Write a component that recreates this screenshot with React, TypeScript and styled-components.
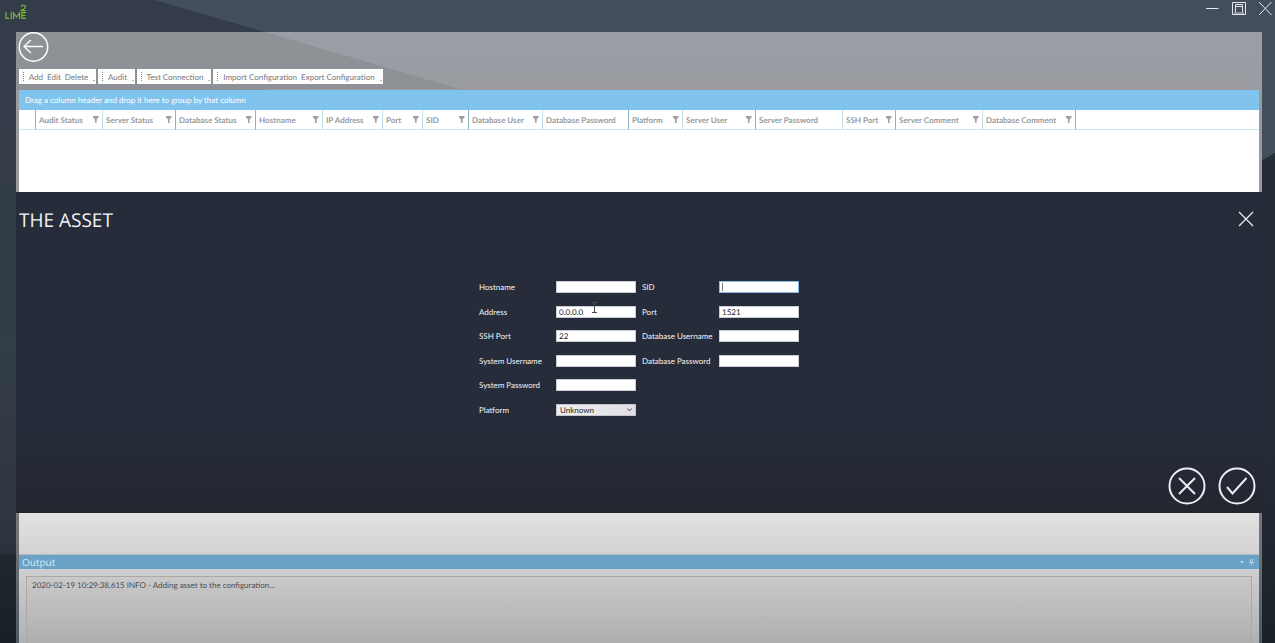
import React from "react";
import styled, { createGlobalStyle } from "styled-components";

const GlobalStyle = createGlobalStyle`
  * { box-sizing: border-box; }
  html, body { margin: 0; padding: 0; }
  body, button, input, select, table {
    font-family: Lato, "Open Sans", sans-serif;
    font-size: 8px;
    line-height: 12px;
    text-rendering: geometricPrecision;
  }
  button { border: 0; padding: 0; margin: 0; background: none; color: inherit; cursor: pointer; }
`;

const Page = styled.div`
  min-height: 100vh;
  display: flex;
  flex-direction: column;
  background:
    linear-gradient(to bottom right, #434e5c 50%, #262e39 50%) right 153px / 13px 7px no-repeat,
    linear-gradient(#434e5c 0 153px, #262d38 160px, #252c37 440px, #1a2229) right top / 13px 100% no-repeat,
    linear-gradient(#343c49, #323d47 350px, #303642 500px, #2c333e 552px, #1f272e 556px, #191f26) left top / 16px 100% no-repeat,
    linear-gradient(to top right, #343c49 50%, transparent 50%) 155px 0 / 305px 89px no-repeat,
    linear-gradient(#343c49, #343c49) left top / 155px 100% no-repeat,
    #434e5c;
`;

const TitleBar = styled.header`
  height: 32px;
  display: flex;
  justify-content: space-between;
  align-items: flex-start;
  padding: 0 3px 0 5px;
`;

const WindowButtons = styled.div`
  display: flex;
  gap: 12px;
  padding-top: 1px;
  color: #e4e8ee;
  svg { display: block; }
`;

const Body = styled.main`
  flex: 1;
  display: flex;
  flex-direction: column;
  margin: 0 13px 0 16px;
`;

const TopPanel = styled.section`
  background:
    linear-gradient(to top right, #8e9196 50%, transparent 50%) 249px 0 / 195px 57px no-repeat,
    linear-gradient(#8e9196, #8e9196) left top / 249px 58px no-repeat,
    linear-gradient(#9a9ea7, #999b9f 58px);
  padding: 0 3px;
`;

const BackButton = styled.button`
  display: block;
  height: 30px;
  margin-left: -1px;
  svg { display: block; }
`;

const Toolbars = styled.div`
  display: flex;
  gap: 2px;
  padding: 7px 0 6px;
`;

const Toolbar = styled.div<{ $width: number }>`
  width: ${(p) => p.$width}px;
  height: 15px;
  display: flex;
  align-items: center;
  justify-content: space-between;
  padding: 0 1px 0 4px;
  background: #fdfdfd;
  color: #76787c;
`;

const Grip = styled.span`
  height: 9px;
  border-left: 1px dotted #8a8a8a;
`;

const ToolbarItems = styled.div`
  display: flex;
  gap: 4px;
  white-space: nowrap;
`;

const Overflow = styled.span`
  width: 2px;
  height: 1px;
  align-self: flex-end;
  margin-bottom: 3px;
  background: #b5b5b5;
`;

const GroupBar = styled.div`
  height: 20px;
  padding: 4px 6px;
  background: #80c4ed;
  color: #fff;
  white-space: nowrap;
`;

const GridArea = styled.div`
  height: 82px;
  background: #fff;
`;

const GridTable = styled.table`
  width: 100%;
  table-layout: fixed;
  border-collapse: separate;
  border-spacing: 0;
`;

const HeaderCell = styled.th<{ $strong?: boolean; $last?: boolean }>`
  height: 20px;
  padding: 0 3px;
  border-bottom: 1px solid #cfe5f2;
  border-right: ${(p) => (p.$last ? "0" : `1px solid ${p.$strong ? "#8db4c9" : "#c3dcea"}`)};
  color: #999ba0;
  font-weight: 700;
  text-align: left;
  white-space: nowrap;
`;

const HeaderContent = styled.div`
  display: flex;
  justify-content: space-between;
  align-items: center;
  svg { flex: none; }
`;

const Dialog = styled.section`
  flex: none;
  height: 321px;
  display: flex;
  flex-direction: column;
  justify-content: space-between;
  padding: 14px 6px 8px 3px;
  background: linear-gradient(#262c39 75%, #22262f);
  color: #f2f4f8;
`;

const DialogHeader = styled.div`
  height: 28px;
  display: flex;
  justify-content: space-between;
  align-items: center;
`;

const DialogTitle = styled.h1`
  margin: 0;
  font-family: "Open Sans", "Noto Sans", sans-serif;
  font-size: 19px;
  line-height: 28px;
  font-weight: 400;
`;

const CloseButton = styled.button`
  padding: 0 2px 2px 0;
  svg { display: block; }
`;

const Form = styled.form`
  min-height: 135px;
  display: grid;
  grid-template-columns: 77px 80px 83px 80px;
  justify-content: center;
  align-content: space-between;
  padding-left: 3px;
  margin-top: -4px;
`;

const Label = styled.label<{ $second?: boolean }>`
  grid-column: ${(p) => (p.$second ? 3 : 1)};
  margin-left: ${(p) => (p.$second ? 6 : 0)}px;
  white-space: nowrap;
`;

const Field = styled.div<{ $second?: boolean }>`
  position: relative;
  height: 12px;
  display: flex;
  grid-column: ${(p) => (p.$second ? 4 : 2)};
`;

const TextInput = styled.input<{ $focused?: boolean }>`
  width: 80px;
  height: 12px;
  padding: 0 2px;
  border: 1px solid ${(p) => (p.$focused ? "#8bbde8" : "#c9ccd4")};
  border-radius: 0;
  background: #fff;
  color: #22252c;
  line-height: 10px;
  outline: 0;
`;

const Caret = styled.span`
  position: absolute;
  left: 3px;
  top: 2px;
  width: 1px;
  height: 8px;
  background: #777;
`;

const Pointer = styled.svg`
  position: absolute;
  left: 36px;
  top: -4px;
`;

const Select = styled.select`
  appearance: none;
  width: 80px;
  height: 12px;
  padding: 0 3px;
  border: 1px solid #c4c6cc;
  border-radius: 0;
  background: linear-gradient(90deg, #efeff1, #e0e0e4);
  color: #22252c;
  line-height: 10px;
`;

const Chevron = styled.svg`
  position: absolute;
  right: 4px;
  top: 4px;
  pointer-events: none;
`;

const DialogActions = styled.div`
  display: flex;
  justify-content: flex-end;
  gap: 12px;
  svg { display: block; }
`;

const BottomPanel = styled.section`
  flex: 1;
  display: flex;
  flex-direction: column;
  padding: 0 3px;
  background: linear-gradient(#77797c, #6b7176 40px, #4f5960);
`;

const Spacer = styled.div`
  height: 42px;
  background: linear-gradient(#e2e2e2, #d3d3d4);
  border-bottom: 1px solid #b9b9ba;
`;

const OutputHeader = styled.div`
  height: 14px;
  display: flex;
  justify-content: space-between;
  align-items: center;
  padding: 0 5px 0 3px;
  background: #6aa2c7;
  color: #dceaf3;
`;

const OutputTitle = styled.h2`
  margin: 0;
  font-family: "Open Sans", "Noto Sans", sans-serif;
  font-size: 10px;
  line-height: 14px;
  font-weight: 400;
`;

const PanelTools = styled.div`
  display: flex;
  gap: 4px;
  color: #b6d6ea;
  svg { display: block; }
`;

const OutputBody = styled.div`
  flex: 1;
  display: flex;
  padding: 7px 7px 0;
  background: linear-gradient(#d0cfd0, #b1b1b1);
`;

const Log = styled.div`
  flex: 1;
  padding: 2px 5px;
  border: 1px solid #aaa8a8;
  border-bottom: 0;
  background: linear-gradient(#cac9ca, #afafaf);
  color: #4c4c4e;
`;

type Column = { name: string; width: number; filter?: boolean; strong?: boolean };

const columns: Column[] = [
  { name: "Audit Status", width: 67, filter: true },
  { name: "Server Status", width: 73, filter: true, strong: true },
  { name: "Database Status", width: 80, filter: true, strong: true },
  { name: "Hostname", width: 67, filter: true },
  { name: "IP Address", width: 60, filter: true },
  { name: "Port", width: 40, filter: true },
  { name: "SID", width: 46, filter: true, strong: true },
  { name: "Database User", width: 74, filter: true },
  { name: "Database Password", width: 86, strong: true },
  { name: "Platform", width: 54, filter: true },
  { name: "Server User", width: 73, filter: true, strong: true },
  { name: "Server Password", width: 87 },
  { name: "SSH Port", width: 53, filter: true, strong: true },
  { name: "Server Comment", width: 87, filter: true },
  { name: "Database Comment", width: 93, filter: true, strong: true },
];

const toolbars = [
  { items: ["Add", "Edit", "Delete"], width: 77 },
  { items: ["Audit"], width: 37 },
  { items: ["Test Connection"], width: 74 },
  { items: ["Import Configuration", "Export Configuration"], width: 170 },
];

const Logo = () => (
  <svg width="24" height="20" viewBox="0 0 24 20" role="img" aria-label="Lime 2">
    <g fill="none" stroke="#7cb82f" strokeWidth="1.2">
      <path d="M1 12v6.400h3.500M6.300 12v7M8.600 19v-6l3 4 3-4V19M21 12.600h-4v5.800h4M17 15.500h3.500" />
      <path d="M16.300 6.800c0-2.200 4-2.200 4 .2 0 1.500-2.500 2.500-4 3.700h4.500" />
    </g>
  </svg>
);

const FilterIcon = () => (
  <svg width="6" height="8" viewBox="0 0 6 8" aria-hidden="true">
    <path d="M0 0h5.500v1.500L3.600 3.500V7H2V3.500L0 1.500z" fill="#a19fa4" />
  </svg>
);

const App = () => (
  <>
    <GlobalStyle />
    <Page>
      <TitleBar>
        <Logo />
        <WindowButtons>
          <button type="button" aria-label="Minimize">
            <svg width="14" height="15" viewBox="0 0 14 15"><path d="M0 7.500h12.500" stroke="currentColor" /></svg>
          </button>
          <button type="button" aria-label="Maximize">
            <svg width="14" height="15" viewBox="0 0 14 15" fill="none" stroke="currentColor">
              <path d="M.5 1.500h13v12H.5zM3.500 11v-7.500h7v7.500M3.500 5.500h7" />
              <path d="M2 12h10" stroke="#8c939d" strokeWidth="2" />
            </svg>
          </button>
          <button type="button" aria-label="Close">
            <svg width="14" height="15" viewBox="0 0 14 15" fill="none" stroke="currentColor">
              <path d="M1 1l12.500 13M13.500 1L1 14" />
            </svg>
          </button>
        </WindowButtons>
      </TitleBar>
      <Body>
        <TopPanel>
          <BackButton type="button" aria-label="Back">
            <svg width="31" height="30" viewBox="0 0 31 30" fill="none" stroke="#fff">
              <circle cx="15.500" cy="15" r="14.200" strokeWidth="1.500" />
              <path d="M6 14.500h19M13 8l-7 6.500 7 6.500" strokeWidth="1.300" />
            </svg>
          </BackButton>
          <Toolbars>
            {toolbars.map((bar) => (
              <Toolbar key={bar.items[0]} $width={bar.width}>
                <Grip />
                <ToolbarItems>
                  {bar.items.map((item) => (
                    <button type="button" key={item}>{item}</button>
                  ))}
                </ToolbarItems>
                <Overflow />
              </Toolbar>
            ))}
          </Toolbars>
          <GroupBar>Drag a column header and drop it here to group by that column</GroupBar>
          <GridArea>
            <GridTable>
              <colgroup>
                <col style={{ width: 17 }} />
                {columns.map((c) => (
                  <col key={c.name} style={{ width: c.width }} />
                ))}
                <col />
              </colgroup>
              <thead>
                <tr>
                  <HeaderCell $strong />
                  {columns.map((c) => (
                    <HeaderCell key={c.name} $strong={c.strong} scope="col">
                      <HeaderContent>
                        {c.name}
                        {c.filter && <FilterIcon />}
                      </HeaderContent>
                    </HeaderCell>
                  ))}
                  <HeaderCell $last />
                </tr>
              </thead>
            </GridTable>
          </GridArea>
        </TopPanel>

        <Dialog role="dialog" aria-labelledby="asset-title">
          <DialogHeader>
            <DialogTitle id="asset-title">THE ASSET</DialogTitle>
            <CloseButton type="button" aria-label="Close dialog">
              <svg width="16" height="16" viewBox="0 0 16 16" stroke="#eef0f5" strokeWidth="1.200">
                <path d="M1 1l14 14M15 1L1 15" />
              </svg>
            </CloseButton>
          </DialogHeader>
          <Form>
            <Label htmlFor="hostname">Hostname</Label>
            <Field><TextInput id="hostname" /></Field>
            <Label $second htmlFor="sid">SID</Label>
            <Field $second><TextInput id="sid" $focused /><Caret /></Field>

            <Label htmlFor="address">Address</Label>
            <Field>
              <TextInput id="address" defaultValue="0.0.0.0" />
              <Pointer width="5" height="12" viewBox="0 0 5 12" stroke="#4a4d55" fill="none" aria-hidden="true">
                <path d="M0 .5h5M2.500 0v11M0 10.500h5" />
              </Pointer>
            </Field>
            <Label $second htmlFor="port">Port</Label>
            <Field $second><TextInput id="port" defaultValue="1521" /></Field>

            <Label htmlFor="ssh">SSH Port</Label>
            <Field><TextInput id="ssh" defaultValue="22" /></Field>
            <Label $second htmlFor="dbuser">Database Username</Label>
            <Field $second><TextInput id="dbuser" /></Field>

            <Label htmlFor="sysuser">System Username</Label>
            <Field><TextInput id="sysuser" /></Field>
            <Label $second htmlFor="dbpass">Database Password</Label>
            <Field $second><TextInput id="dbpass" type="password" /></Field>

            <Label htmlFor="syspass">System Password</Label>
            <Field><TextInput id="syspass" type="password" /></Field>

            <Label htmlFor="platform">Platform</Label>
            <Field>
              <Select id="platform"><option>Unknown</option></Select>
              <Chevron width="5" height="4" viewBox="0 0 5 4" fill="none" stroke="#555" aria-hidden="true">
                <path d="M.5.5l2 2.500 2-2.500" />
              </Chevron>
            </Field>
          </Form>
          <DialogActions>
            <button type="button" aria-label="Cancel">
              <svg width="38" height="38" viewBox="0 0 38 38" fill="none" stroke="#eceef6" strokeWidth="2">
                <circle cx="19" cy="19" r="17.500" />
                <path d="M11 11l16 16M27 11L11 27" />
              </svg>
            </button>
            <button type="button" aria-label="Confirm">
              <svg width="38" height="38" viewBox="0 0 38 38" fill="none" stroke="#eceef6" strokeWidth="2">
                <circle cx="19" cy="19" r="17.500" />
                <path d="M9 20l5.500 6.500L28.500 11" />
              </svg>
            </button>
          </DialogActions>
        </Dialog>

        <BottomPanel>
          <Spacer />
          <OutputHeader>
            <OutputTitle>Output</OutputTitle>
            <PanelTools>
              <svg width="6" height="6" viewBox="0 0 6 6" aria-hidden="true"><path d="M1 2h4L3 4.500z" fill="currentColor" /></svg>
              <svg width="5" height="6" viewBox="0 0 5 6" stroke="currentColor" fill="none" aria-hidden="true">
                <path d="M1.500 0v3.500M3.500 0v3.500M0 3.500h5M2.500 3.500V6" />
              </svg>
            </PanelTools>
          </OutputHeader>
          <OutputBody>
            <Log>2020-02-19 10:29:38,615 INFO - Adding asset to the configuration...</Log>
          </OutputBody>
        </BottomPanel>
      </Body>
    </Page>
  </>
);

export default App;
